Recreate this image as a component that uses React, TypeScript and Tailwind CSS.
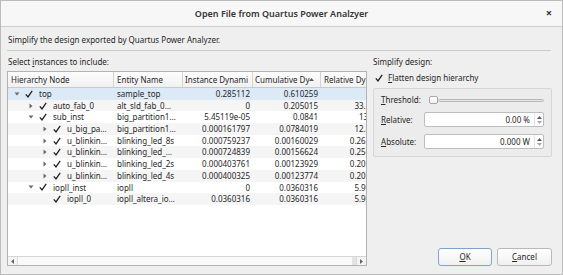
import type { ReactNode } from "react";

type Row = {
  name: string;
  level: number;
  exp: "open" | "closed" | "leaf";
  entity: string;
  inst: string;
  cum: string;
  rel: string;
};

const rows: Row[] = [
  { name: "top", level: 0, exp: "open", entity: "sample_top", inst: "0.285112", cum: "0.610259", rel: "" },
  { name: "auto_fab_0", level: 1, exp: "closed", entity: "alt_sld_fab_0…", inst: "0", cum: "0.205015", rel: "33.5948" },
  { name: "sub_inst", level: 1, exp: "open", entity: "big_partition1…", inst: "5.45119e-05", cum: "0.0841", rel: "13.781" },
  { name: "u_big_pa…", level: 2, exp: "closed", entity: "big_partition1…", inst: "0.000161797", cum: "0.0784019", rel: "12.8473" },
  { name: "u_blinkin…", level: 2, exp: "closed", entity: "blinking_led_8s", inst: "0.000759237", cum: "0.00160029", rel: "0.262231" },
  { name: "u_blinkin…", level: 2, exp: "closed", entity: "blinking_led_…", inst: "0.000724839", cum: "0.00156624", rel: "0.256651" },
  { name: "u_blinkin…", level: 2, exp: "closed", entity: "blinking_led_2s", inst: "0.000403761", cum: "0.00123929", rel: "0.203077" },
  { name: "u_blinkin…", level: 2, exp: "closed", entity: "blinking_led_4s", inst: "0.000400325", cum: "0.00123774", rel: "0.202823" },
  { name: "iopll_inst", level: 1, exp: "open", entity: "iopll", inst: "0", cum: "0.0360316", rel: "5.90431" },
  { name: "iopll_0", level: 2, exp: "leaf", entity: "iopll_altera_io…", inst: "0.0360316", cum: "0.0360316", rel: "5.90431" },
];

function Check() {
  return (
    <svg width="8" height="8" viewBox="0 0 8 8" className="shrink-0">
      <path d="M0.8 4.3 L3 6.9 L7.2 0.8" fill="none" stroke="#1e1e1e" strokeWidth="1.25" />
    </svg>
  );
}

function Arrow({ exp }: { exp: Row["exp"] }) {
  if (exp === "leaf") return <span className="w-[6px] shrink-0" />;
  return (
    <svg width="6" height="6" viewBox="0 0 6 6" className="shrink-0">
      {exp === "open" ? <path d="M0.5 1.5 L5.5 1.5 L3 4.5 Z" fill="#6a6a6a" /> : <path d="M1.5 0.5 L4.5 3 L1.5 5.5 Z" fill="#6a6a6a" />}
    </svg>
  );
}

function U({ children }: { children: ReactNode }) {
  return <span className="underline underline-offset-[1px]">{children}</span>;
}

function SpinBox({ value }: { value: string }) {
  return (
    <div className="flex h-[15px] w-[120px] rounded-[2px] border border-[#bdbdbd] bg-white">
      <div className="flex flex-1 items-center justify-end pr-[4px]">{value}</div>
      <div className="flex w-[9px] flex-col items-center justify-center gap-[2px] border-l border-[#e2e2e2]">
        <svg width="5" height="3" viewBox="0 0 5 3">
          <path d="M0 3 L2.5 0 L5 3 Z" fill="#5a5a5a" />
        </svg>
        <svg width="5" height="3" viewBox="0 0 5 3">
          <path d="M0 0 L2.5 3 L5 0 Z" fill="#a8a8a8" />
        </svg>
      </div>
    </div>
  );
}

export default function App() {
  return (
    <div className="flex h-[275px] w-[563px] flex-col overflow-hidden border border-[#bcbcbc] bg-[#efefef] font-['Noto_Sans',sans-serif] text-[8px] leading-[12px] text-[#262626]">
      <div className="relative flex h-[26px] shrink-0 items-center justify-center border-b border-[#cfcfcf] bg-[#f7f7f7]">
        <span className="text-[9px] font-semibold text-[#353535]">Open File from Quartus Power Analzyer</span>
        <span className="absolute right-[10px] top-[6px] text-[11px] font-bold leading-[12px] text-[#333]">×</span>
      </div>

      <div className="flex flex-1 flex-col px-[6px] pr-[11px]">
        <div className="pl-[1px] pt-[7px]">Simplify the design exported by Quartus Power Analyzer.</div>
        <div className="mt-[4px] h-px bg-[#c9c9c9]" />

        <div className="mt-[5px] flex gap-[6px]">
          <div className="flex w-[360px] flex-col">
            <div className="pl-[1px]">
              Select <U>i</U>nstances to include:
            </div>
            <div className="mt-[3px] flex h-[195px] flex-col overflow-hidden border border-[#b3b3b3] bg-white">
              <div className="flex h-[16px] shrink-0 border-b border-[#cacaca] bg-gradient-to-b from-[#fdfdfd] to-[#f1f1f1]">
                <div className="flex w-[106px] shrink-0 items-center border-r border-[#d3d3d3] pl-[3px]">Hierarchy Node</div>
                <div className="flex w-[69px] shrink-0 items-center border-r border-[#d3d3d3] pl-[3px]">Entity Name</div>
                <div className="flex w-[70px] shrink-0 items-center whitespace-nowrap border-r border-[#d3d3d3] pl-[2px]">Instance Dynami</div>
                <div className="relative flex w-[68px] shrink-0 items-center whitespace-nowrap border-r border-[#d3d3d3] pl-[2px]">
                  <span>Cumulative Dy</span>
                  <svg width="5" height="3" viewBox="0 0 5 3" className="absolute right-[6px] top-[6px]">
                    <path d="M0 3 L2.5 0 L5 3 Z" fill="#5a5a5a" />
                  </svg>
                </div>
                <div className="flex flex-1 items-center whitespace-nowrap pl-[3px]">Relative Dy</div>
              </div>

              <div className="flex-1">
                {rows.map((r, i) => (
                  <div
                    key={i}
                    className={`flex h-[11.7px] items-center leading-[11.7px] ${
                      i === 0 ? "bg-[#dce9f7]" : i % 2 === 1 ? "bg-[#f5f5f5]" : "bg-white"
                    }`}
                  >
                    <div
                      className={`flex w-[106px] shrink-0 items-center overflow-hidden whitespace-nowrap ${
                        r.level === 0 ? "pl-[6px]" : r.level === 1 ? "pl-[20px]" : "pl-[34px]"
                      }`}
                    >
                      <Arrow exp={r.exp} />
                      <span className="ml-[5px]" />
                      <Check />
                      <span className="ml-[6px] overflow-hidden">{r.name}</span>
                    </div>
                    <div className="w-[69px] shrink-0 overflow-hidden whitespace-nowrap pl-[3px]">{r.entity}</div>
                    <div className="w-[70px] shrink-0 pr-[3px] text-right">{r.inst}</div>
                    <div className="w-[68px] shrink-0 pr-[3px] text-right">{r.cum}</div>
                    <div className="w-[66px] shrink-0 whitespace-nowrap pr-[3px] text-right">{r.rel}</div>
                  </div>
                ))}
              </div>

              <div className="flex h-[9px] shrink-0 items-stretch border-t border-[#d6d6d6] bg-[#f4f4f4]">
                <div className="flex w-[10px] items-center justify-center border-r border-[#dcdcdc]">
                  <svg width="3" height="5" viewBox="0 0 3 5">
                    <path d="M3 0 L0 2.5 L3 5 Z" fill="#666" />
                  </svg>
                </div>
                <div className="flex-1 bg-[#f9f9f9]" />
                <div className="w-[4px] bg-[#e4e4e4]" />
                <div className="flex w-[10px] items-center justify-center border-l border-[#dcdcdc]">
                  <svg width="3" height="5" viewBox="0 0 3 5">
                    <path d="M0 0 L3 2.5 L0 5 Z" fill="#666" />
                  </svg>
                </div>
              </div>
            </div>
          </div>

          <div className="flex flex-1 flex-col">
            <div>Simplify design:</div>
            <div className="mt-[4px] flex items-center pl-[2px]">
              <Check />
              <span className="ml-[5px]">
                <U>F</U>latten design hierarchy
              </span>
            </div>
            <div className="mt-[4px] flex flex-col rounded-[2px] border border-[#d6d6d6] bg-[#ececec] pb-[7px] pl-[7px] pr-[7px] pt-[5px]">
              <div className="flex h-[12px] items-center">
                <span className="w-[48px] whitespace-nowrap">
                  <U>T</U>hreshold:
                </span>
                <div className="flex flex-1 items-center">
                  <div className="h-[8px] w-[9px] shrink-0 rounded-[2px] border border-[#a9a9a9] bg-gradient-to-b from-white to-[#efefef]" />
                  <div className="h-[3px] flex-1 rounded-full border border-[#b9b9b9] bg-[#e3e3e3]" />
                </div>
              </div>
              <div className="mt-[6px] flex items-center">
                <span className="w-[43px] whitespace-nowrap">
                  <U>R</U>elative:
                </span>
                <SpinBox value="0.00 %" />
              </div>
              <div className="mt-[7px] flex items-center">
                <span className="w-[43px] whitespace-nowrap">
                  <U>A</U>bsolute:
                </span>
                <SpinBox value="0.000 W" />
              </div>
            </div>
            <div className="flex-1" />
            <div className="flex justify-end gap-[5px]">
              <button className="flex h-[18px] w-[54px] items-center justify-center rounded-[3px] border border-[#7fa3cf] bg-gradient-to-b from-white to-[#f0f0f0]">
                <U>O</U>K
              </button>
              <button className="flex h-[18px] w-[55px] items-center justify-center rounded-[3px] border border-[#b9b9b9] bg-gradient-to-b from-white to-[#f0f0f0]">
                <U>C</U>ancel
              </button>
            </div>
          </div>
        </div>
      </div>
    </div>
  );
}
